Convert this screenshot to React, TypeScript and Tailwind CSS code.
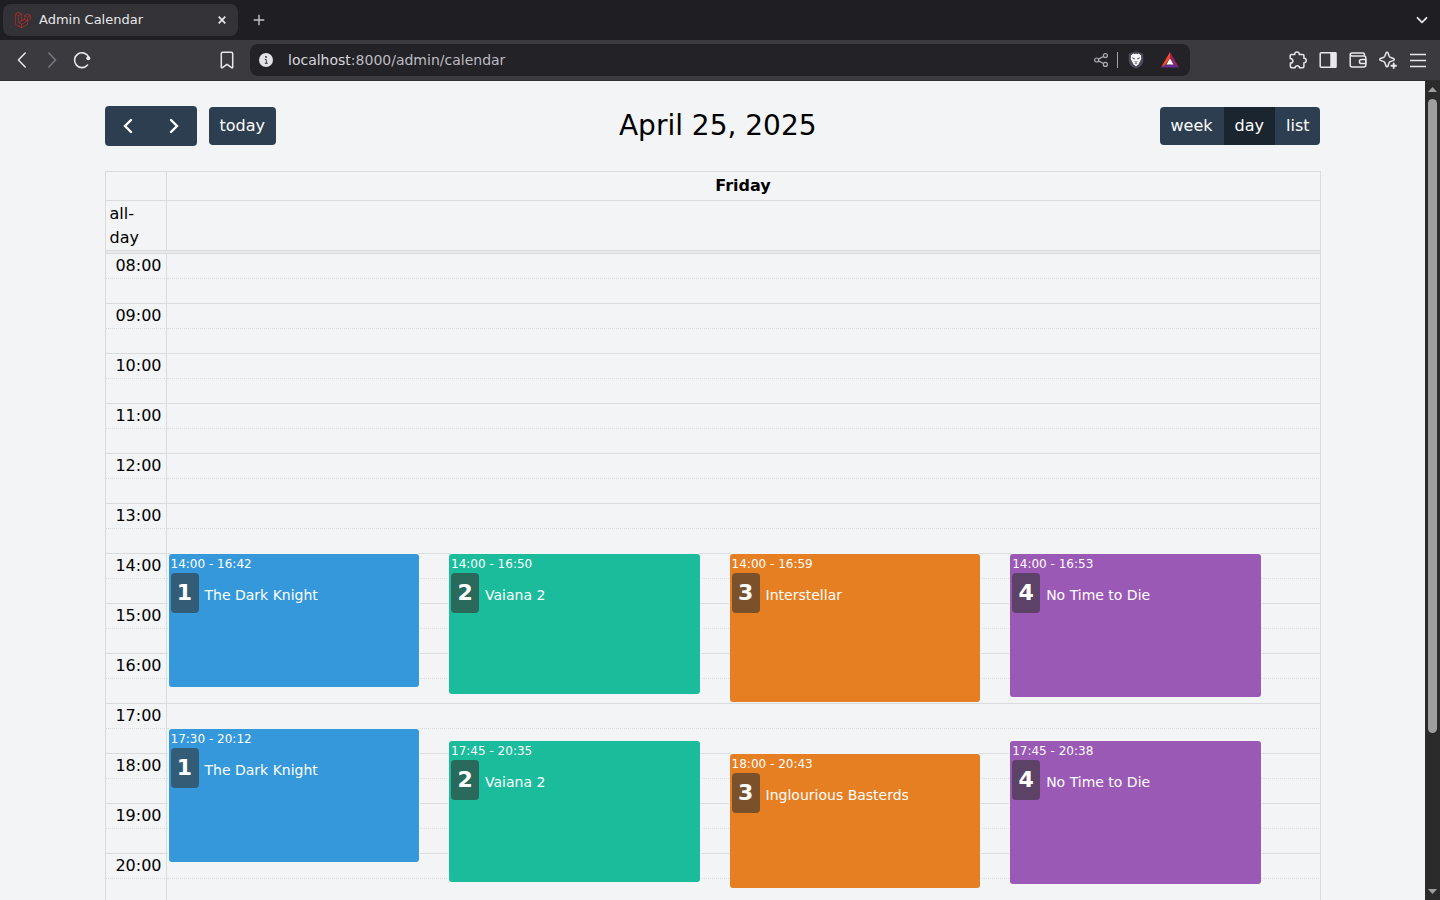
import React from "react";
import { SiLaravel } from "react-icons/si";

type Show = { start: string; end: string; title: string };
type Hall = { id: number; color: string; shows: Show[] };

const FIRST_HOUR = 8;
const HOUR_HEIGHT = 50;

const hours = Array.from({ length: 13 }, (_, i) => FIRST_HOUR + i);

const halls: Hall[] = [
  {
    id: 1,
    color: "bg-[#3498db]",
    shows: [
      { start: "14:00", end: "16:42", title: "The Dark Knight" },
      { start: "17:30", end: "20:12", title: "The Dark Knight" },
    ],
  },
  {
    id: 2,
    color: "bg-[#1abc9c]",
    shows: [
      { start: "14:00", end: "16:50", title: "Vaiana 2" },
      { start: "17:45", end: "20:35", title: "Vaiana 2" },
    ],
  },
  {
    id: 3,
    color: "bg-[#e67e22]",
    shows: [
      { start: "14:00", end: "16:59", title: "Interstellar" },
      { start: "18:00", end: "20:43", title: "Inglourious Basterds" },
    ],
  },
  {
    id: 4,
    color: "bg-[#9b59b6]",
    shows: [
      { start: "14:00", end: "16:53", title: "No Time to Die" },
      { start: "17:45", end: "20:38", title: "No Time to Die" },
    ],
  },
];

function offset(time: string) {
  const [h, m] = time.split(":").map(Number);
  return ((h * 60 + m - FIRST_HOUR * 60) * HOUR_HEIGHT) / 60;
}

function Icon({ children, className = "size-5" }: { children: React.ReactNode; className?: string }) {
  return (
    <svg
      viewBox="0 0 20 20"
      className={className}
      fill="none"
      stroke="currentColor"
      strokeWidth="1.5"
      strokeLinecap="round"
      strokeLinejoin="round"
      aria-hidden="true"
    >
      {children}
    </svg>
  );
}

function BarButton({ label, children, className = "" }: { label: string; children: React.ReactNode; className?: string }) {
  return (
    <button type="button" aria-label={label} className={`flex h-8 w-[30px] items-center justify-center ${className}`}>
      {children}
    </button>
  );
}

function TabStrip() {
  return (
    <div className="flex h-10 items-center bg-[#1f1e23] pl-[3px] text-[#e8e7ec]">
      <div className="flex h-8 w-[235px] items-center rounded-lg bg-[#333236] pl-3 pr-2">
        <SiLaravel className="size-4 text-[#e02a24]" aria-hidden="true" />
        <span className="ml-2 flex-1 text-[13px] leading-4">Admin Calendar</span>
        <button type="button" aria-label="Close tab" className="flex size-4 items-center justify-center">
          <svg viewBox="0 0 8 8" className="size-2" stroke="currentColor" strokeWidth="1.7" aria-hidden="true">
            <path d="M.7.7l6.6 6.6M7.3.7L.7 7.3" />
          </svg>
        </button>
      </div>
      <button type="button" aria-label="New tab" className="ml-[11px] flex size-5 items-center justify-center">
        <svg viewBox="0 0 12 12" className="size-3" stroke="#c4c3c9" strokeWidth="1.4" aria-hidden="true">
          <path d="M6 .7v10.6M.7 6h10.6" />
        </svg>
      </button>
      <button type="button" aria-label="Search tabs" className="ml-auto mr-2 flex size-5 items-center justify-center">
        <Icon>
          <path d="M5.5 7.8l4.5 4.5 4.5-4.5" strokeWidth="1.8" />
        </Icon>
      </button>
    </div>
  );
}

function AddressBar() {
  return (
    <div className="flex h-[41px] items-center border-b border-[#2f2e33] bg-[#3b3a3f] px-[7px] text-[#e8e7ec]">
      <BarButton label="Back">
        <Icon>
          <path d="M13.2 3L6.4 10l6.8 7" />
        </Icon>
      </BarButton>
      <BarButton label="Forward" className="text-[#7b7a80]">
        <Icon>
          <path d="M6.8 3l6.8 7-6.8 7" />
        </Icon>
      </BarButton>
      <BarButton label="Reload">
        <Icon>
          <path d="M15.6 15A7.4 7.4 0 1 1 16.7 7.2" strokeWidth="1.6" />
          <circle cx="16.3" cy="8.2" r="2" fill="currentColor" stroke="none" />
        </Icon>
      </BarButton>
      <BarButton label="Bookmark" className="ml-[115px]">
        <Icon>
          <path d="M4.3 3.6c0-.8.6-1.4 1.4-1.4h8.6c.8 0 1.4.6 1.4 1.4v13.6c0 .7-.6.9-1.1.5L10 14.3l-4.6 3.4c-.5.4-1.1.2-1.1-.5z" />
        </Icon>
      </BarButton>
      <div className="ml-2 flex h-8 flex-1 items-center rounded-lg bg-[#232227] pl-[9px] pr-[10px]">
        <svg viewBox="0 0 14 14" className="size-[14px]" aria-hidden="true">
          <circle cx="7" cy="7" r="7" fill="#e3e2e7" />
          <circle cx="7" cy="3.9" r=".9" fill="#232227" />
          <path d="M5.8 6.4h1.5v3.8M5.8 10.300h3" fill="none" stroke="#3c3b40" strokeWidth="1" />
        </svg>
        <a href="/admin/calendar" className="ml-[15px] flex-1 text-sm text-[#bdbcc2]">
          <span className="text-[#d8d7dc]">localhost</span>:8000/admin/calendar
        </a>
        <button type="button" aria-label="Share" className="flex size-4 items-center justify-center text-[#b0afb5]">
          <svg viewBox="0 0 16 16" className="size-4" fill="none" stroke="currentColor" strokeWidth="1.2" aria-hidden="true">
            <circle cx="3.6" cy="8" r="2" />
            <circle cx="12.4" cy="3.6" r="2" />
            <circle cx="12.4" cy="12.4" r="2" />
            <path d="M5.4 7.1l5.2-2.6M5.4 8.9l5.2 2.6" />
          </svg>
        </button>
        <span className="ml-2 h-4 w-px bg-[#a3a2a8]" />
        <button type="button" aria-label="Brave Shields" className="ml-2 flex size-5 items-center justify-center">
          <svg viewBox="0 0 20 20" className="size-5" aria-hidden="true">
            <path d="M10 1.200l7.300 2.500v6.600c0 4.300-3.300 6.900-7.300 8.500-4-1.600-7.300-4.200-7.300-8.500V3.700z" fill="#494957" />
            <path
              d="M7.200 3.600l1.300.5 1.500-.3 1.500.3 1.300-.5 1.600 1.500.900.300-.4 1.400.5 1.500-1.200 3-1.100 1.600-.6 1.600L10 16.200l-2.500-1.700-.6-1.600-1.100-1.600-1.200-3 .5-1.500-.4-1.400.900-.300z"
              fill="#f8f7fc"
            />
            <path d="M6 7.700l2.700.7-.5.800zM14 7.700l-2.700.7.500.8z" fill="#494957" stroke="#494957" strokeWidth=".4" />
            <path d="M8.400 11.200L10 12l1.600-.8M10 12v1.500M8.700 14l1.300-.7 1.300.7" fill="none" stroke="#6b6a78" strokeWidth=".8" />
          </svg>
        </button>
        <button type="button" aria-label="Rewards" className="ml-[14px] flex size-5 items-center justify-center">
          <svg viewBox="0 0 20 20" className="size-5" aria-hidden="true">
            <path d="M10 2v6L5.700 14.600 1 17.600z" fill="#ff4724" />
            <path d="M10 2l9 15.600-4.700-3L10 8z" fill="#9e1f63" />
            <path d="M1 17.600l4.700-3h8.600l4.700 3z" fill="#662d91" />
            <path d="M10 8.500l3.700 6.100H6.300z" fill="#fff" />
          </svg>
        </button>
      </div>
      <BarButton label="Extensions" className="ml-[93px]">
        <Icon>
          <path d="M3.400 4.400h3.400C6.500 2.900 7.700 1.900 9 1.900s2.500 1 2.200 2.500h3.500c.7 0 1.200.5 1.200 1.200v2.600c1.300 0 2.300.9 2.300 2.200s-1 2.300-2.300 2.300v3.900c0 .7-.5 1.200-1.200 1.200h-3.100c-.2-1.400-1.100-2.100-2.300-2.100s-2.100.7-2.300 2.100H3.600c-.7 0-1.200-.5-1.200-1.200v-3.500c1.600-.1 2.500-.9 2.500-2.200S4 8.700 2.200 8.500V5.600c0-.7.5-1.200 1.200-1.200z" />
        </Icon>
      </BarButton>
      <BarButton label="Sidebar">
        <Icon>
          <rect x="2.200" y="2.700" width="15.600" height="14.600" rx="1" />
          <path d="M13 2.700h4.800v14.600H13z" fill="currentColor" />
        </Icon>
      </BarButton>
      <BarButton label="Wallet">
        <Icon>
          <path d="M16.500 6.100V4.600c0-1-.7-1.700-1.700-1.700H4.200C3 2.900 2.200 3.700 2.200 4.600v10.400c0 1.200.8 2 2 2h11.600c1.200 0 2-.8 2-2V8.100c0-1.200-.8-2-2-2H4.200c-1 0-2-.5-2-1.500" />
          <path d="M17.800 9.400h-4.300a2.100 2.100 0 0 0 0 4.200h4.300z" />
        </Icon>
      </BarButton>
      <BarButton label="Leo AI">
        <Icon>
          <path d="M9 2.200c.5 0 .8.300 1 .8l1.200 3.300c.2.500.5.800 1 1l3.300 1.200c1 .4 1 1.500 0 1.900l-3.300 1.200c-.5.200-.8.500-1 1L10 15.900c-.4 1-1.600 1-2 0l-1.200-3.300c-.2-.5-.5-.8-1-1l-3.300-1.200c-1-.4-1-1.500 0-1.900l3.300-1.200c.5-.2.800-.5 1-1L8 3c.2-.5.500-.8 1-.8z" />
          <path d="M15.700 13.500v4.500M13.400 15.700h4.600" strokeWidth="1.900" />
        </Icon>
      </BarButton>
      <BarButton label="Menu">
        <Icon>
          <path d="M2 4.500h16M2 10.500h16M2 16.500h16" strokeLinecap="butt" />
        </Icon>
      </BarButton>
    </div>
  );
}

function Chevron({ d }: { d: string }) {
  return (
    <svg viewBox="0 0 24 24" className="size-6" fill="none" stroke="currentColor" strokeWidth="2.4" strokeLinecap="round" aria-hidden="true">
      <path d={d} />
    </svg>
  );
}

function CalendarToolbar() {
  return (
    <div className="flex items-center justify-between">
      <div className="flex items-center gap-3 text-white">
        <div className="flex h-10 overflow-hidden rounded bg-[#2c3e50]">
          <button type="button" aria-label="Previous day" className="flex w-[46px] items-center justify-center">
            <Chevron d="M15 6l-6 6 6 6" />
          </button>
          <button type="button" aria-label="Next day" className="flex w-[46px] items-center justify-center">
            <Chevron d="M9 6l6 6-6 6" />
          </button>
        </div>
        <button type="button" className="h-[38px] rounded bg-[#2c3e50] px-[11px] leading-6">
          today
        </button>
      </div>
      <h2 className="text-[28px] leading-9">April 25, 2025</h2>
      <div className="flex h-[38px] overflow-hidden rounded bg-[#2c3e50] leading-6 text-white">
        <button type="button" className="px-[11px]">
          week
        </button>
        <button type="button" aria-pressed="true" className="bg-[#1a252f] px-[11px]">
          day
        </button>
        <button type="button" className="px-[11px]">
          list
        </button>
      </div>
    </div>
  );
}

function ShowCard({ hall, show }: { hall: Hall; show: Show }) {
  const top = Math.floor(offset(show.start));
  return (
    <a
      href="#show"
      className={`absolute inset-x-0 block overflow-hidden rounded-[3px] px-[2px] pt-px text-white ring-1 ring-[#f3f4f6] ${hall.color}`}
      style={{ top: top, height: Math.ceil(offset(show.end)) - top - 2 }}
    >
      <div className="text-xs leading-[18px]">
        {show.start} - {show.end}
      </div>
      <div className="flex items-baseline gap-[6px]">
        <span className="w-7 rounded bg-[#333333]/60 text-center text-[22px] font-bold leading-10">{hall.id}</span>
        <span className="text-sm">{show.title}</span>
      </div>
    </a>
  );
}

function DayGrid() {
  return (
    <table className="mt-[25px] w-full table-fixed border-separate border-spacing-0 border-l border-t border-[#d9dbdd]">
      <thead>
        <tr>
          <th className="h-[29px] w-[61px] border-b border-r border-[#d9dbdd] p-0" aria-label="Time" />
          <th className="border-b border-r border-[#d9dbdd] p-0 font-bold leading-6">Friday</th>
        </tr>
      </thead>
      <tbody>
        <tr>
          <th className="h-[50px] border-b border-r border-[#d9dbdd] px-1 py-0 text-left font-normal leading-6">
            all-
            <br />
            day
          </th>
          <td className="border-b border-r border-[#d9dbdd]" />
        </tr>
        <tr>
          <td colSpan={2} className="h-[3px] border-b border-r border-[#d9dbdd] bg-[#e7e9eb] p-0" />
        </tr>
        {hours.map((hour) => (
          <React.Fragment key={hour}>
            <tr>
              <th className="h-[25px] border-b border-r border-b-[#d9dbdd] border-r-[#d9dbdd] p-0 pr-1 text-right font-normal leading-6 [border-bottom-style:dotted]">
                {String(hour).padStart(2, "0")}:00
              </th>
              <td className="relative border-b border-r border-[#d9dbdd] p-0 [border-bottom-style:dotted]">
                {hour === FIRST_HOUR && (
                  <div className="absolute left-[2px] right-[2.5%] top-0 z-10 grid grid-cols-4">
                    {halls.map((hall) => (
                      <div key={hall.id} className="relative mr-[30px]">
                        {hall.shows.map((show) => (
                          <ShowCard key={show.start} hall={hall} show={show} />
                        ))}
                      </div>
                    ))}
                  </div>
                )}
              </td>
            </tr>
            <tr>
              <td className="h-[25px] border-b border-r border-[#d9dbdd] p-0" />
              <td className="border-b border-r border-[#d9dbdd] p-0" />
            </tr>
          </React.Fragment>
        ))}
      </tbody>
    </table>
  );
}

function ScrollTrack() {
  return (
    <div className="flex w-[15px] shrink-0 flex-col items-center bg-[#2b2b2b] py-[6px]" aria-hidden="true">
      <svg viewBox="0 0 9 5" className="h-[5px] w-[9px]" fill="#9f9f9f">
        <path d="M4.500 0L9 5H0z" />
      </svg>
      <div className="my-[7px] w-full flex-1 px-[3px]">
        <div className="h-[81%] rounded-full bg-[#9f9f9f]" />
      </div>
      <svg viewBox="0 0 9 5" className="h-[5px] w-[9px]" fill="#9f9f9f">
        <path d="M4.500 5L0 0h9z" />
      </svg>
    </div>
  );
}

export default function App() {
  return (
    <div className="flex h-screen flex-col overflow-hidden bg-[#f3f4f6] font-['DejaVu_Sans',sans-serif] text-base text-black">
      <header>
        <TabStrip />
        <AddressBar />
      </header>
      <div className="flex min-h-0 flex-1">
        <main className="min-w-0 flex-1 overflow-hidden">
          <div className="mx-auto max-w-7xl px-8 pt-[25px]">
            <CalendarToolbar />
            <DayGrid />
          </div>
        </main>
        <ScrollTrack />
      </div>
    </div>
  );
}
